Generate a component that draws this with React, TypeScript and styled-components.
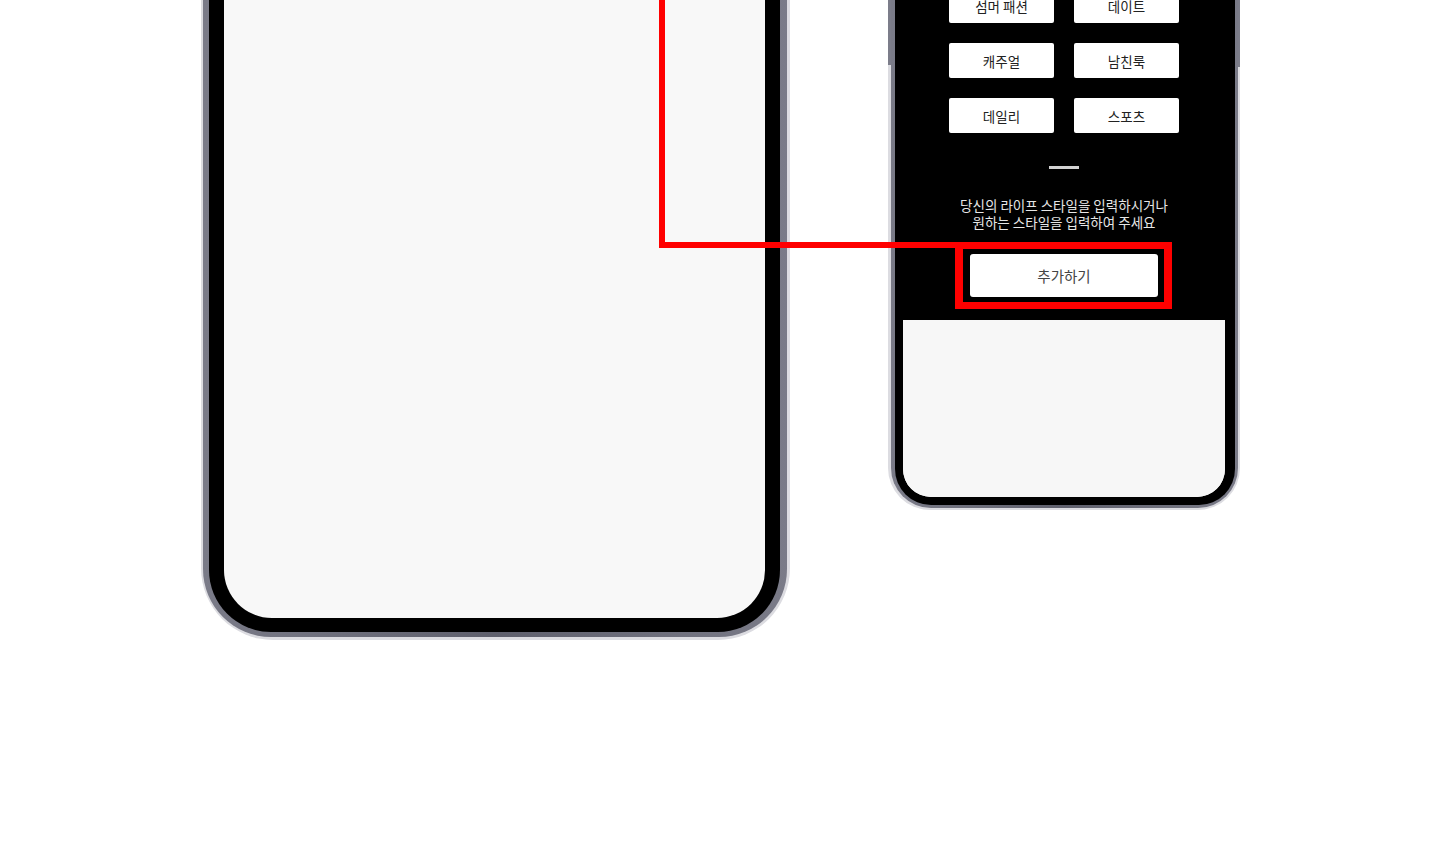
import React from "react";
import styled, { createGlobalStyle } from "styled-components";

const GlobalStyle = createGlobalStyle`
  html, body {
    margin: 0;
    padding: 0;
    background: #ffffff;
    overflow: hidden;
  }
  body {
    font-family: "Noto Sans CJK KR", "Noto Sans", sans-serif;
  }
`;

const Page = styled.div`
  position: relative;
  width: 1440px;
  height: 860px;
  overflow: hidden;
  background: #ffffff;
`;

const Stage = styled.div`
  display: flex;
  align-items: flex-start;
  gap: 98px;
  padding-left: 201px;
  margin-top: -200px;
`;

type Edge = { t: number; r: number; b: number; l: number };

const Shell = styled.div<{ $h: number; $pad: Edge; $radius: number }>`
  position: relative;
  height: ${(p) => p.$h}px;
  box-sizing: border-box;
  display: flex;
  padding: ${(p) => `${p.$pad.t}px ${p.$pad.r}px ${p.$pad.b}px ${p.$pad.l}px`};
  background: #dcdce1;
  border-radius: 0 0 ${(p) => p.$radius}px ${(p) => p.$radius}px;
`;

const Rim = styled.div<{ $pad: Edge; $radius: number }>`
  flex: 1;
  display: flex;
  padding: ${(p) => `${p.$pad.t}px ${p.$pad.r}px ${p.$pad.b}px ${p.$pad.l}px`};
  background: linear-gradient(90deg, #7a7b88 0%, #5f606d 50%, #7a7b88 100%);
  border-radius: 0 0 ${(p) => p.$radius}px ${(p) => p.$radius}px;
`;

const Bezel = styled.div<{ $pad: Edge; $radius: number }>`
  flex: 1;
  display: flex;
  padding: ${(p) => `${p.$pad.t}px ${p.$pad.r}px ${p.$pad.b}px ${p.$pad.l}px`};
  background: #000000;
  border-radius: 0 0 ${(p) => p.$radius}px ${(p) => p.$radius}px;
`;

const Screen = styled.div<{ $w: number; $radius: number }>`
  width: ${(p) => p.$w}px;
  display: flex;
  flex-direction: column;
  background: #f8f8f8;
  border-radius: 0 0 ${(p) => p.$radius}px ${(p) => p.$radius}px;
  overflow: hidden;
`;

const SideButton = styled.div<{ $side: "left" | "right"; $w: number; $h: number }>`
  position: absolute;
  top: 0;
  ${(p) => p.$side}: 0;
  width: ${(p) => p.$w}px;
  height: ${(p) => p.$h}px;
  background: #7c7d8a;
`;

const DarkPanel = styled.div`
  flex: 1;
  background: #000000;
  display: flex;
  flex-direction: column;
  align-items: center;
  justify-content: flex-end;
  padding-bottom: 23px;
`;

const LightArea = styled.div`
  height: 177px;
  background: #f7f7f7;
`;

const ChipGrid = styled.div`
  display: grid;
  grid-template-columns: 105px 105px;
  grid-auto-rows: 35px;
  column-gap: 20px;
  row-gap: 20px;
`;

const Chip = styled.div`
  background: #ffffff;
  border-radius: 2px;
  display: flex;
  align-items: center;
  justify-content: center;
  font-size: 13.5px;
  color: #222222;
`;

const Dash = styled.div`
  width: 30px;
  height: 3px;
  margin-top: 33px;
  background: #d2d2d2;
`;

const Guide = styled.p`
  margin: 28px 0 0;
  font-size: 13.5px;
  line-height: 17px;
  color: #e6e6e6;
  text-align: center;
`;

const AddButton = styled.button`
  margin-top: 23px;
  width: 188px;
  height: 43px;
  border: none;
  border-radius: 3px;
  background: #ffffff;
  font-family: "Noto Sans CJK KR", "Noto Sans", sans-serif;
  font-size: 14.5px;
  color: #444444;
  padding: 0;
`;

const Connector = styled.div`
  position: absolute;
  left: 659px;
  top: -10px;
  width: 296px;
  height: 258px;
  box-sizing: border-box;
  border-left: 6px solid #ff0000;
  border-bottom: 6px solid #ff0000;
`;

const Highlight = styled.div`
  position: absolute;
  left: 955px;
  top: 242px;
  width: 217px;
  height: 67px;
  box-sizing: border-box;
  border-style: solid;
  border-color: #ff0000;
  border-width: 7px 8px;
`;

const chips = ["섬머 패션", "데이트", "캐주얼", "남친룩", "데일리", "스포츠"];

export default function App() {
  return (
    <Page>
      <GlobalStyle />
      <Stage>
        <Shell $h={840} $pad={{ t: 0, r: 3, b: 3, l: 2 }} $radius={72}>
          <Rim $pad={{ t: 0, r: 7, b: 5, l: 6 }} $radius={68}>
            <Bezel $pad={{ t: 0, r: 15, b: 14, l: 15 }} $radius={62}>
              <Screen $w={541} $radius={48} />
            </Bezel>
          </Rim>
        </Shell>

        <Shell $h={710} $pad={{ t: 0, r: 2, b: 2, l: 3 }} $radius={42}>
          <SideButton $side="left" $w={3} $h={265} />
          <SideButton $side="right" $w={2} $h={267} />
          <Rim $pad={{ t: 4, r: 3, b: 3, l: 4 }} $radius={40}>
            <Bezel $pad={{ t: 8, r: 10, b: 8, l: 8 }} $radius={36}>
              <Screen $w={322} $radius={28}>
                <DarkPanel>
                  <ChipGrid>
                    {chips.map((c) => (
                      <Chip key={c}>{c}</Chip>
                    ))}
                  </ChipGrid>
                  <Dash />
                  <Guide>
                    당신의 라이프 스타일을 입력하시거나
                    <br />
                    원하는 스타일을 입력하여 주세요
                  </Guide>
                  <AddButton>추가하기</AddButton>
                </DarkPanel>
                <LightArea />
              </Screen>
            </Bezel>
          </Rim>
        </Shell>
      </Stage>
      <Connector />
      <Highlight />
    </Page>
  );
}
